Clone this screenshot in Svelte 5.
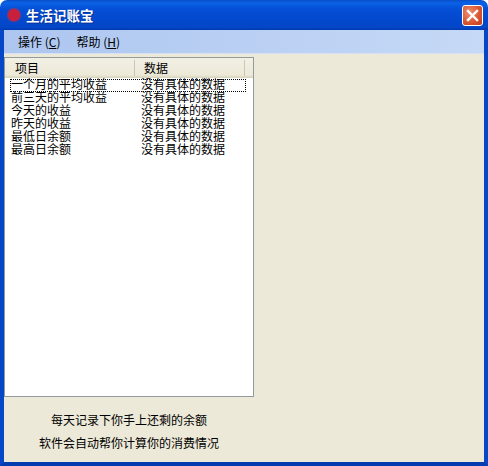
<script>
  const rows = [
    "一个月的平均收益",
    "前三天的平均收益",
    "今天的收益",
    "昨天的收益",
    "最低日余额",
    "最高日余额"
  ];
</script>

<div class="window">
  <div class="titlebar">
    <div class="appicon"></div>
    <div class="title">生活记账宝</div>
    <div class="close">
      <svg width="13" height="13" viewBox="0 0 13 13">
        <path d="M2 2 L11 11 M11 2 L2 11" stroke="#fff" stroke-width="2.4" stroke-linecap="square" fill="none" />
      </svg>
    </div>
  </div>
  <div class="inner">
    <div class="menubar">
      <span class="menu">操作 (<u>C</u>)</span>
      <span class="menu">帮助 (<u>H</u>)</span>
    </div>
    <div class="content">
      <div class="listview">
        <div class="head">
          <div class="col1">项目</div>
          <div class="col2">数据</div>
        </div>
        <div class="rows">
          {#each rows as r, i}
            <div class="row" class:focus={i === 0}>
              <div class="name">{r}</div>
              <div class="val">没有具体的数据</div>
            </div>
          {/each}
        </div>
      </div>
      <div class="tip first">每天记录下你手上还剩的余额</div>
      <div class="tip">软件会自动帮你计算你的消费情况</div>
    </div>
  </div>
</div>

<style>
:global(body) {
  margin: 0;
  background: #fff;
}

.window {
  width: 488px;
  height: 466px;
  display: flex;
  flex-direction: column;
  font-family: "Noto Sans CJK SC", "Liberation Sans", sans-serif;
  font-size: 12px;
  color: #000;
  overflow: hidden;
}

.titlebar {
  height: 30px;
  flex: none;
  display: flex;
  align-items: center;
  border-radius: 7px 7px 0 0;
  background: linear-gradient(#0a4fc8 0%, #0a62e6 10%, #044fd6 30%, #0348cc 70%, #0347c8 90%, #023ab0 100%);
}

.appicon {
  width: 12px;
  height: 12px;
  margin-left: 8px;
  border-radius: 50%;
  background: #c8203a;
  box-shadow: 0 0 1px 1px #7a3a80;
}

.title {
  margin-left: 6px;
  font-size: 13.5px;
  font-weight: bold;
  color: #fff;
  flex: 1;
  text-shadow: 1px 1px 0 #0a2f90;
}

.close {
  width: 21px;
  height: 21px;
  margin-right: 5px;
  margin-top: 1px;
  box-sizing: border-box;
  border: 1px solid #fff;
  border-radius: 3px;
  background: radial-gradient(circle at 35% 35%, #ec9073, #d8542e 60%, #bd3a1c);
  display: flex;
  align-items: center;
  justify-content: center;
}

.inner {
  flex: 1;
  min-height: 0;
  display: flex;
  flex-direction: column;
  border-left: 4px solid #0647c8;
  border-right: 4px solid #0647c8;
  border-bottom: 4px solid #053cb0;
}

.menubar {
  height: 24px;
  flex: none;
  box-sizing: border-box;
  display: flex;
  align-items: center;
  padding-left: 14px;
  gap: 16px;
  background: linear-gradient(90deg, #adc6f0, #c6d9f6);
  border-bottom: 1px solid #d6e2f4;
  color: #000;
}

.menu {
  line-height: 16px;
}

.content {
  flex: 1;
  background: #ece9d8;
  padding-top: 3px;
}

.listview {
  width: 248px;
  height: 338px;
  border: 1px solid #919b9c;
  background: #fff;
}

.head {
  height: 20px;
  display: flex;
  background: linear-gradient(#f2f0e4, #ece9d8 85%, #d6d2bc);
  line-height: 20px;
}

.col1 {
  width: 130px;
  padding-left: 10px;
  box-sizing: border-box;
  border-right: 1px solid #cbc7b8;
  margin: 2px 0;
  line-height: 16px;
}

.col2 {
  padding-left: 9px;
  width: 110px;
  box-sizing: border-box;
  border-right: 1px solid #cbc7b8;
  margin: 2px 0;
  line-height: 16px;
}

.rows {
  padding: 1px 7px 0 5px;
}

.row {
  height: 13px;
  display: flex;
  line-height: 9px;
  white-space: nowrap;
}

.row.focus {
  outline: 1px dotted #000;
  outline-offset: -1px;
}

.name {
  width: 131px;
  padding-left: 1px;
  box-sizing: border-box;
}

.tip {
  width: 248px;
  text-align: center;
  line-height: 16px;
  margin-top: 7px;
  margin-left: 1px;
}

.tip.first {
  margin-top: 15px;
}
</style>
